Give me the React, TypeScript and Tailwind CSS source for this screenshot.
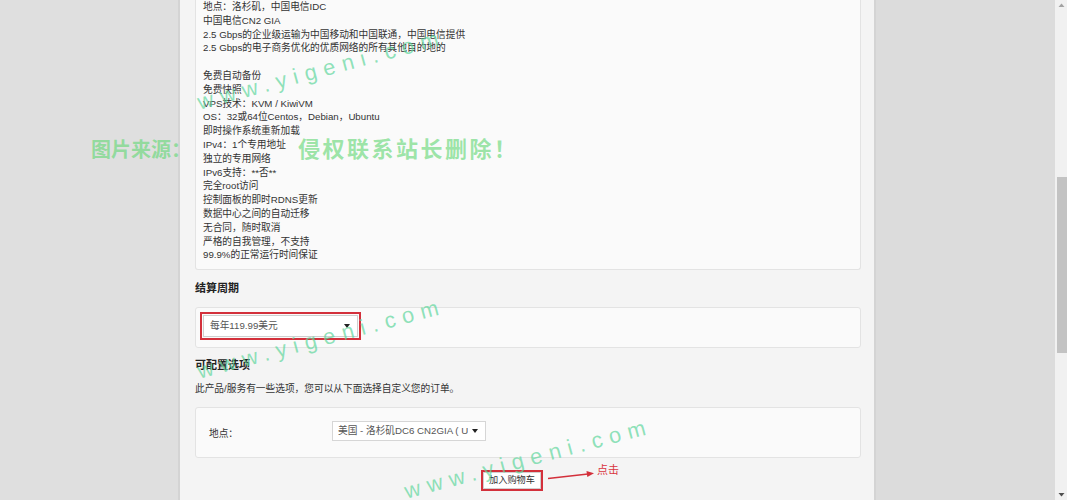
import React from "react";

const lines1 = [
  "地点：洛杉矶，中国电信IDC",
  "中国电信CN2 GIA",
  "2.5 Gbps的企业级运输为中国移动和中国联通，中国电信提供",
  "2.5 Gbps的电子商务优化的优质网络的所有其他目的地的",
];
const lines2 = [
  "免费自动备份",
  "免费快照",
  "VPS技术：KVM / KiwiVM",
  "OS：32或64位Centos，Debian，Ubuntu",
  "即时操作系统重新加载",
  "IPv4：1个专用地址",
  "独立的专用网络",
  "IPv6支持：**否**",
  "完全root访问",
  "控制面板的即时RDNS更新",
  "数据中心之间的自动迁移",
  "无合同，随时取消",
  "严格的自我管理，不支持",
  "99.9%的正常运行时间保证",
];

function Caret() {
  return (
    <svg width="6" height="4" viewBox="0 0 6 4" className="shrink-0">
      <polygon points="0,0 6,0 3,4" fill="#222" />
    </svg>
  );
}

export default function App() {
  return (
    <div className="relative w-[1067px] h-[500px] overflow-hidden flex bg-[#dcdcdc] font-['Liberation_Sans','Noto_Sans_CJK_SC',sans-serif] text-[#333]">
      <div className="w-[178px] shrink-0 bg-[#dfdfdf]" />
      <div className="w-[698px] shrink-0 border-x-2 border-[#d4d4d4] bg-[#f4f4f4] pl-[15px] pr-[13px] flex flex-col">
        {/* well 1 */}
        <div className="bg-[#fafafa] border border-t-0 border-[#e3e3e3] rounded-b-[3px] pl-[7px] pb-[7px] text-[9.7px] leading-[13.8px]">
          {lines1.map((l) => (
            <div key={l} className="whitespace-nowrap">{l}</div>
          ))}
          <div className="h-[13.8px]" />
          {lines2.map((l) => (
            <div key={l} className="whitespace-nowrap">{l}</div>
          ))}
        </div>

        <div className="mt-[11px] text-[11px] font-bold leading-[15px] text-[#222]">结算周期</div>

        {/* well 2 */}
        <div className="mt-[11px] bg-[#fafafa] border border-[#e3e3e3] rounded-[3px] pl-[4px] pt-[4px] pb-[7px] flex">
          <div className="border-2 border-[#d3303b] p-px flex">
            <div className="w-[155px] h-[22px] bg-white border border-[#cfcfcf] flex items-center pl-[6px] pr-[7px] text-[9.7px] text-[#555]">
              <span className="flex-1 whitespace-nowrap">每年119.99美元</span>
              <Caret />
            </div>
          </div>
        </div>

        <div className="mt-[10px] text-[11px] font-bold leading-[15px] text-[#222]">可配置选项</div>
        <div className="mt-[9px] text-[9.7px] leading-[13.8px] whitespace-nowrap">
          此产品/服务有一些选项，您可以从下面选择自定义您的订单。
        </div>

        {/* well 3 */}
        <div className="mt-[11px] bg-[#fafafa] border border-[#e3e3e3] rounded-[3px] pl-[13px] pt-[13px] pb-[16px] flex items-start">
          <div className="w-[123px] mt-[6px] text-[9.7px] leading-[13.8px]">地点：</div>
          <div className="w-[154px] h-[20px] bg-white border border-[#d6d6d6] flex items-center pl-[5px] pr-[7px] text-[9.7px] text-[#555]">
            <span className="flex-1 overflow-hidden whitespace-nowrap">美国 - 洛杉矶DC6 CN2GIA ( USD $119.99 )</span>
            <span className="w-[4px] shrink-0" />
            <Caret />
          </div>
        </div>

        {/* button row */}
        <div className="mt-[12px] ml-[286px] flex items-start">
          <div className="border-2 border-[#d3303b] flex">
            <div className="w-[58px] h-[17px] bg-white border border-[#d0d0d0] flex items-center justify-center text-[9.2px] text-[#333] whitespace-nowrap">
              加入购物车
            </div>
          </div>
          <svg width="48" height="14" viewBox="0 0 48 14" className="ml-[5px] shrink-0">
            <line x1="0" y1="8.5" x2="40" y2="4" stroke="#d3303b" strokeWidth="1.3" />
            <polygon points="46,3.3 38.5,1 39.3,7" fill="#d3303b" />
          </svg>
          <div className="ml-[1px] -mt-[7px] text-[11px] leading-[14px] text-[#d9343f] whitespace-nowrap">点击</div>
        </div>
      </div>
      <div className="flex-1 bg-[#dcdcdc]" />
      {/* scrollbar */}
      <div className="w-[12px] shrink-0 bg-[#f1f1f1] flex flex-col items-center">
        <svg width="7" height="10" viewBox="0 0 7 10" className="shrink-0">
          <polygon points="0.5,7 6.5,7 3.5,3.5" fill="#a3a3a3" />
        </svg>
        <div className="h-[167px] shrink-0" />
        <div className="w-[10px] h-[176px] shrink-0 bg-[#c3c3c3] ml-[1px]" />
        <div className="flex-1" />
        <svg width="7" height="10" viewBox="0 0 7 10" className="shrink-0">
          <polygon points="0.5,3 6.5,3 3.5,6.5" fill="#505050" />
        </svg>
      </div>

      {/* watermarks */}
      <div className="absolute left-[91px] top-[138px] flex font-bold leading-[24px] whitespace-nowrap text-[#66d877]/65 pointer-events-none">
        <span className="text-[20px]">图片来源：</span>
        <span className="ml-[107px] text-[22px] tracking-[2.5px]">侵权联系站长删除！</span>
      </div>
      <div className="absolute left-[198px] top-[90px] origin-left rotate-[-15deg] text-[22px] leading-[26px] tracking-[7px] whitespace-nowrap text-[#5fd69c]/70 font-['Liberation_Sans',sans-serif] pointer-events-none">
        www.yigeni.com
      </div>
      <div className="absolute left-[198px] top-[359px] origin-left rotate-[-15deg] text-[22px] leading-[26px] tracking-[7px] whitespace-nowrap text-[#5fd69c]/70 font-['Liberation_Sans',sans-serif] pointer-events-none">
        www.yigeni.com
      </div>
      <div className="absolute left-[405px] top-[479px] origin-left rotate-[-15deg] text-[22px] leading-[26px] tracking-[7px] whitespace-nowrap text-[#5fd69c]/70 font-['Liberation_Sans',sans-serif] pointer-events-none">
        www.yigeni.com
      </div>
    </div>
  );
}
